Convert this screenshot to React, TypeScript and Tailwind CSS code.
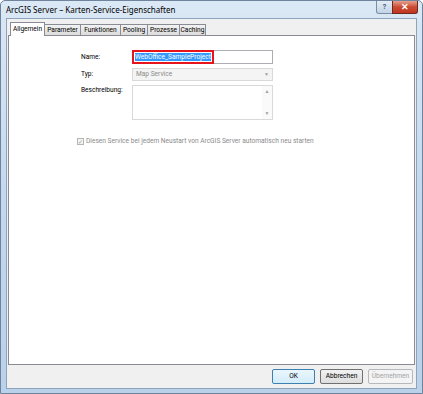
import React from "react";

const tabs: [string, string][] = [
  ["Allgemein", "w-[35px]"],
  ["Parameter", "w-[37px]"],
  ["Funktionen", "w-[41px]"],
  ["Pooling", "w-[28px]"],
  ["Prozesse", "w-[33px]"],
  ["Caching", "w-[27px]"],
];

function Tab({ label, width, active }: { label: string; width: string; active?: boolean }) {
  if (active) {
    return (
      <div className={"relative z-10 -mb-px flex h-[14px] items-center justify-center border border-b-0 border-[#898c95] bg-white pb-[1px] text-black " + width}>
        {label}
      </div>
    );
  }
  return (
    <div className={"-ml-px flex h-[11px] items-center justify-center border border-b-0 border-[#898c95] bg-gradient-to-b from-[#f2f2f2] to-[#dcdcdc] text-black " + width}>
      {label}
    </div>
  );
}

function Button({ label, primary, disabled }: { label: string; primary?: boolean; disabled?: boolean }) {
  return (
    <div
      className={
        "flex h-[15px] items-center justify-center rounded-[2px] border bg-gradient-to-b " +
        (primary
          ? "w-[43px] border-[#3c7fb1] from-[#eaf6fd] to-[#d3ecfa] text-black"
          : disabled
          ? "w-[45px] border-[#b5b9bc] from-[#f4f4f4] to-[#f4f4f4] text-[#a3a3a3]"
          : "w-[43px] border-[#707070] from-[#f2f2f2] to-[#dddddd] text-black")
      }
    >
      {label}
    </div>
  );
}

export default function App() {
  return (
    <div
      className="flex h-[394px] w-[423px] flex-col overflow-hidden rounded-t-[5px] border border-[#6f849c] bg-gradient-to-b from-[#dbe8f5] via-[#c4d8ee] to-[#b9d1ea] text-[6.6px] leading-none"
      style={{ fontFamily: 'Roboto, "Noto Sans", sans-serif' }}
    >
      {/* title bar */}
      <div className="flex h-[17px] items-start justify-between">
        <div className="pl-[5px] pt-[5px] text-[8px] text-black" style={{ fontFamily: '"Noto Sans", sans-serif' }}>
          ArcGIS Server – Karten-Service-Eigenschaften
        </div>
        <div className="mr-[4px] flex">
          <div className="flex h-[13px] w-[17px] items-center justify-center rounded-bl-[3px] border border-t-0 border-[#7a8da4] bg-gradient-to-b from-[#e3ecf6] to-[#c3d4e7] text-[7px] font-bold text-[#4b5a6c]">
            ?
          </div>
          <div className="-ml-px flex h-[13px] w-[26px] items-center justify-center rounded-br-[3px] border border-t-0 border-[#6d2a22] bg-gradient-to-b from-[#e5a08f] via-[#cb4a33] to-[#c2361f] text-[9px] font-bold text-white">
            ✕
          </div>
        </div>
      </div>

      {/* client area */}
      <div className="mx-[5px] mb-[4px] flex flex-1 flex-col border border-[#8fa3ba] bg-[#f0f0f0]">
        <div className="flex items-end pl-[3px] pt-[3px]">
          {tabs.map(([t, w], i) => (
            <Tab key={t} label={t} width={w} active={i === 0} />
          ))}
        </div>
        <div className="mx-[1px] flex-1 border border-[#898c95] bg-white text-black">
          <div className="grid grid-cols-[51px_141px] gap-y-[4px] pl-[72px] pt-[14px]">
            <div className="pt-[4px]">Name:</div>
            <div className="flex h-[14px] items-center border border-[#abadb3] bg-white">
              <div className="-ml-px flex h-[14px] items-center border-2 border-[#e8141b] px-[1px]">
                <span className="bg-[#3399ff] py-[1px] text-white">WebOffice_SampleProject</span>
              </div>
            </div>

            <div className="pt-[3px]">Typ:</div>
            <div className="flex h-[13px] items-center justify-between border border-[#d9d9d9] bg-[#f4f4f4] pl-[3px] pr-[3px] text-[#8a8a8a]">
              <span>Map Service</span>
              <span className="text-[5px] text-[#a0a0a0]">▼</span>
            </div>

            <div className="pt-[2px]">Beschreibung:</div>
            <div className="flex h-[35px] justify-end border border-[#d9d9d9] bg-white">
              <div className="flex w-[10px] flex-col items-center justify-between bg-[#fafafa] py-[3px] text-[5px] text-[#a0a0a0]">
                <span>▲</span>
                <span>▼</span>
              </div>
            </div>
          </div>

          <div className="mt-[18px] flex items-center gap-[2px] pl-[68px] text-[#8a8a8a]">
            <div className="flex h-[7px] w-[7px] items-center justify-center border border-[#b5b5b5] bg-[#f4f4f4] text-[6px] text-[#9a9a9a]">
              ✓
            </div>
            <span>Diesen Service bei jedem Neustart von ArcGIS Server automatisch neu starten</span>
          </div>
        </div>
        <div className="flex h-[23px] items-center justify-end gap-[5px] pr-[3px]">
          <Button label="OK" primary />
          <Button label="Abbrechen" />
          <Button label="Übernehmen" disabled />
        </div>
      </div>
    </div>
  );
}
